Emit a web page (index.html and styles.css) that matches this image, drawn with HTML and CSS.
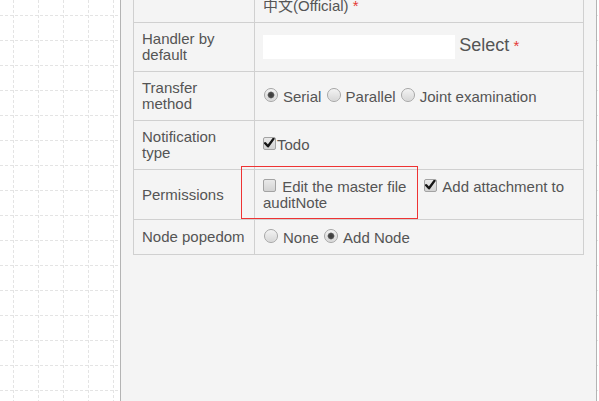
FILE: index.html
```html
<!DOCTYPE html>
<html lang="en">
<head>
<meta charset="utf-8">
<title>Node settings</title>
<link rel="stylesheet" href="styles.css">
</head>
<body>
<main class="panel">
  <div class="form-wrap">
    <table class="form">
      <tr>
        <th>Node name</th>
        <td>
          <div class="name-line"><input class="text" type="text"> English</div>
          <div>中文(Official) <span class="req">*</span></div>
        </td>
      </tr>
      <tr>
        <th>Handler by default</th>
        <td><input class="text" type="text"> <span class="select">Select</span> <span class="req">*</span></td>
      </tr>
      <tr>
        <th>Transfer method</th>
        <td>
          <label><input class="radio" type="radio" name="transfer" checked>Serial</label>
          <label><input class="radio" type="radio" name="transfer">Parallel</label>
          <label><input class="radio" type="radio" name="transfer">Joint examination</label>
        </td>
      </tr>
      <tr>
        <th>Notification type</th>
        <td><label><input class="check tight" type="checkbox" checked>Todo</label></td>
      </tr>
      <tr>
        <th>Permissions</th>
        <td class="perm-cell">
          <div class="perm-list">
            <label class="perm first"><input class="check" type="checkbox"> Edit the master file auditNote</label>
            <label class="perm"><input class="check" type="checkbox" checked> Add attachment to</label>
          </div>
          <div class="highlight"></div>
        </td>
      </tr>
      <tr>
        <th class="nowrap">Node popedom</th>
        <td>
          <label><input class="radio" type="radio" name="popedom">None</label>
          <label><input class="radio" type="radio" name="popedom" checked>Add Node</label>
        </td>
      </tr>
    </table>
  </div>
</main>
</body>
</html>
```
FILE: styles.css
```css
html, body {
  height: 100%;
}

body {
  margin: 0;
  display: flex;
  overflow: hidden;
  background-color: #ffffff;
  background-image: url("data:image/svg+xml,%3Csvg xmlns='http://www.w3.org/2000/svg' width='25' height='25'%3E%3Cline x1='13.5' y1='0' x2='13.5' y2='25' stroke='%23e4e4e4' stroke-dasharray='3 2'/%3E%3Cline x1='0' y1='15.5' x2='25' y2='15.5' stroke='%23e4e4e4' stroke-dasharray='3 2'/%3E%3C/svg%3E");
  background-position: 0 0;
  font-family: "Liberation Sans", Arial, "Noto Sans CJK SC", sans-serif;
  font-size: 15px;
  line-height: 16px;
  color: #555555;
}

.panel {
  margin-left: 120px;
  width: 477px;
  box-sizing: border-box;
  padding: 0 12px;
  background: #f4f4f4;
  border-left: 1px solid #b4b4b4;
  border-right: 1px solid #b4b4b4;
}

.form-wrap {
  margin-top: -43px;
}

.form {
  width: 100%;
  border-collapse: collapse;
}

.form th,
.form td {
  border: 1px solid #d0d0d0;
  padding: 8px;
  vertical-align: middle;
}

.form th {
  width: 104px;
  text-align: left;
  font-weight: normal;
  color: #555555;
}

.nowrap {
  white-space: nowrap;
}

.name-line {
  height: 24px;
  margin-bottom: 8px;
}

.text {
  width: 192px;
  height: 24px;
  box-sizing: border-box;
  border: none;
  background: #ffffff;
  margin: 0;
  padding: 0 4px;
  vertical-align: middle;
  font: inherit;
}

.select {
  font-size: 18px;
}

.req {
  color: #e53935;
}

label {
  cursor: default;
}

.radio {
  appearance: none;
  -webkit-appearance: none;
  box-sizing: border-box;
  width: 14px;
  height: 14px;
  margin: 1px 5px 0 1px;
  border: 1px solid #a6a6a6;
  border-radius: 50%;
  background: linear-gradient(#f3f3f3, #d6d6d6);
  box-shadow: inset 0 0 1px #ffffff;
  vertical-align: baseline;
}

.radio:checked {
  background:
    radial-gradient(circle, #3a3a3a 0, #4a4a4a 2.5px, #8a8a8a 3.2px, rgba(0,0,0,0) 3.8px),
    linear-gradient(#f3f3f3, #d6d6d6);
}

.check {
  appearance: none;
  -webkit-appearance: none;
  box-sizing: border-box;
  width: 13px;
  height: 13px;
  margin: 0 2px 0 0;
  border: 1px solid #a3a3a3;
  border-radius: 2px;
  background: linear-gradient(#e9e9e9, #d3d3d3);
  vertical-align: baseline;
}

.check.tight {
  margin-right: 1px;
}

.check:checked {
  background:
    url("data:image/svg+xml,%3Csvg xmlns='http://www.w3.org/2000/svg' viewBox='0 0 13 13'%3E%3Cpath d='M2.2 6.2 L5 9.3 L10.6 1.6' fill='none' stroke='%23161616' stroke-width='2.4' stroke-linecap='round' stroke-linejoin='round'/%3E%3C/svg%3E") center / 13px 13px no-repeat,
    linear-gradient(#e9e9e9, #d3d3d3);
}

.perm-cell {
  position: relative;
}

.perm-list {
  display: flex;
  gap: 4px;
  align-items: flex-start;
  padding-top: 1px;
}

.perm.first {
  width: 157px;
  flex: none;
}

.highlight {
  position: absolute;
  left: -14px;
  top: -4px;
  width: 175px;
  height: 51px;
  color: #ee3333;
  border-width: 1px;
  border-style: solid;
  border-color: #ee3333;
  box-shadow: none;
  pointer-events: none;
}
```
